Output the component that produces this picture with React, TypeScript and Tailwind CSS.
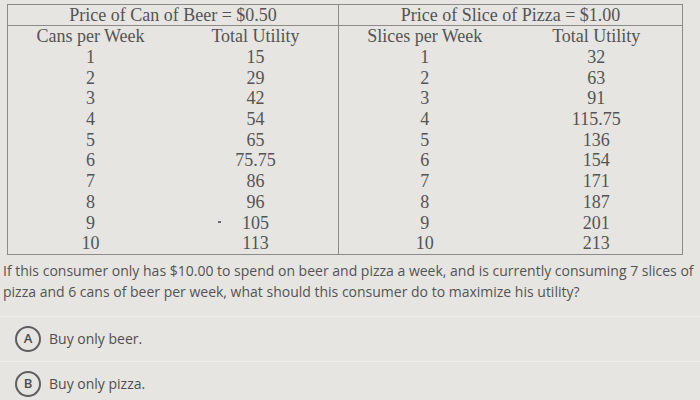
import React from 'react';

const beer = [15, 29, 42, 54, 65, '75.75', 86, 96, 105, 113];
const pizza = [32, 63, 91, '115.75', 136, 154, 171, 187, 201, 213];

const Half = ({
  title,
  unitLabel,
  values,
  className,
}: {
  title: string;
  unitLabel: string;
  values: (number | string)[];
  className?: string;
}) => (
  <div className={className}>
    <div className="h-[21px] flex items-center justify-center border-b border-[#8c8b88] leading-none">
      {title}
    </div>
    <div className="grid grid-cols-2 text-center leading-none">
      <div className="h-[20.7px] flex items-center justify-center">{unitLabel}</div>
      <div className="h-[20.7px] flex items-center justify-center">Total Utility</div>
      {values.map((v, i) => (
        <React.Fragment key={i}>
          <div className="h-[20.7px] flex items-center justify-center">{i + 1}</div>
          <div className="h-[20.7px] flex items-center justify-center relative">
            {/* stray mark on the photo next to 105 */}
            {v === 105 && <span className="absolute left-[45px] top-[9px] w-[3px] h-[2px] bg-[#6a6a6a]" />}
            {v}
          </div>
        </React.Fragment>
      ))}
    </div>
  </div>
);

const Option = ({ letter, text }: { letter: string; text: string }) => (
  <div className="flex items-center gap-[8px] pl-[15px] h-[45px] border-b border-[#eeede9]">
    <div className="w-[26px] h-[26px] shrink-0 rounded-full border-2 border-[#5e5e5e] flex items-center justify-center text-[13px] font-semibold text-[#4a4a4a]">
      {letter}
    </div>
    <span className="text-[14px] text-[#4f4f4f]">{text}</span>
  </div>
);

export default function App() {
  return (
    <div className="w-[700px] h-[400px] overflow-hidden bg-[#e6e5e1] font-['Open_Sans',sans-serif]">
      <div className="pt-[4px] pl-[7px] w-[683px]">
        <div className="flex border border-[#8c8b88] text-[18px] text-[#545454] font-['Liberation_Serif',serif]">
          <Half
            title="Price of Can of Beer = $0.50"
            unitLabel="Cans per Week"
            values={beer}
            className="w-[331px] border-r border-[#8c8b88]"
          />
          <Half
            title="Price of Slice of Pizza = $1.00"
            unitLabel="Slices per Week"
            values={pizza}
            className="flex-1"
          />
        </div>
      </div>

      <p className="pl-[3px] pr-[2px] mt-[5px] text-[14px] leading-[21px] text-[#545454]">
        If this consumer only has $10.00 to spend on beer and pizza a week, and is currently consuming 7 slices of
        pizza and 6 cans of beer per week, what should this consumer do to maximize his utility?
      </p>

      <div className="mt-[14px] border-t border-[#eeede9]">
        <Option letter="A" text="Buy only beer." />
        <Option letter="B" text="Buy only pizza." />
      </div>
    </div>
  );
}
